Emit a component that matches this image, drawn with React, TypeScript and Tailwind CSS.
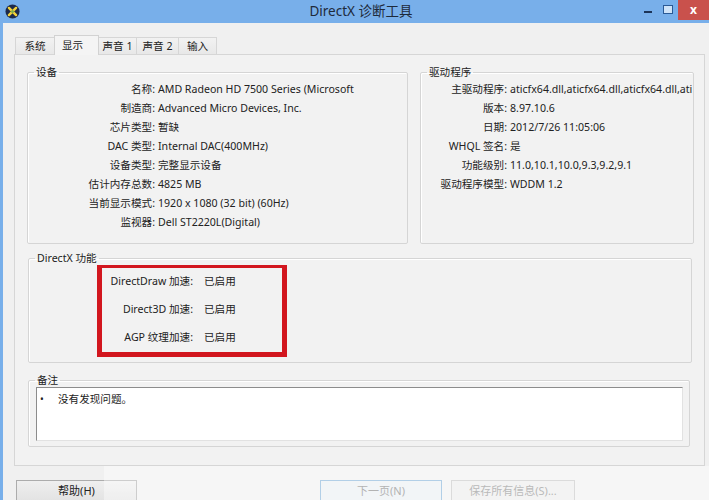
import React from "react";

const deviceRows: [string, string][] = [
  ["名称:", "AMD Radeon HD 7500 Series (Microsoft"],
  ["制造商:", "Advanced Micro Devices, Inc."],
  ["芯片类型:", "暂缺"],
  ["DAC 类型:", "Internal DAC(400MHz)"],
  ["设备类型:", "完整显示设备"],
  ["估计内存总数:", "4825 MB"],
  ["当前显示模式:", "1920 x 1080 (32 bit) (60Hz)"],
  ["监视器:", "Dell ST2220L(Digital)"],
];

const driverRows: [string, string][] = [
  ["主驱动程序:", "aticfx64.dll,aticfx64.dll,aticfx64.dll,ati"],
  ["版本:", "8.97.10.6"],
  ["日期:", "2012/7/26 11:05:06"],
  ["WHQL 签名:", "是"],
  ["功能级别:", "11.0,10.1,10.0,9.3,9.2,9.1"],
  ["驱动程序模型:", "WDDM 1.2"],
];

const featureRows: [string, string][] = [
  ["DirectDraw 加速:", "已启用"],
  ["Direct3D 加速:", "已启用"],
  ["AGP 纹理加速:", "已启用"],
];

const tabs = [
  { name: "系统", w: "w-[40px]", active: false },
  { name: "显示", w: "w-[45px]", active: true },
  { name: "声音 1", w: "w-[39px]", active: false },
  { name: "声音 2", w: "w-[43px]", active: false },
  { name: "输入", w: "w-[39px]", active: false },
];

function AppIcon() {
  return (
    <svg width="15" height="15" viewBox="0 0 16 16">
      <circle cx="8" cy="8" r="7.5" fill="#1d2a4a" />
      <path d="M4.2 4.2 L11.8 11.8 M11.8 4.2 L4.2 11.8" stroke="#f3d23a" strokeWidth="2.6" strokeLinecap="round" />
      <circle cx="8" cy="8" r="1.6" fill="#7fb04a" />
    </svg>
  );
}

function GroupBox({
  title,
  className,
  children,
}: {
  title: string;
  className: string;
  children?: React.ReactNode;
}) {
  return (
    <fieldset
      className={`min-w-0 shrink-0 overflow-hidden rounded-[2px] border border-[#d5d5d5] shadow-[inset_1px_1px_0_#ffffff] ${className}`}
    >
      <legend className="ml-[6px] px-[2px] leading-[14px] text-[#222]">{title}</legend>
      {children}
    </fieldset>
  );
}

function InfoRows({ rows, labelW }: { rows: [string, string][]; labelW: string }) {
  return (
    <div className="flex flex-col pt-[1px]">
      {rows.map(([k, v]) => (
        <div key={k} className="flex h-[19px] items-center whitespace-nowrap">
          <span className={`${labelW} shrink-0 text-right`}>{k}</span>
          <span className="ml-[3px]">{v}</span>
        </div>
      ))}
    </div>
  );
}

export default function App() {
  return (
    <div className="relative flex h-[500px] w-[709px] flex-col overflow-hidden bg-[#f0f0f0] font-['Noto_Sans','Noto_Sans_CJK_SC',sans-serif] text-[10.6px] text-[#222]">
      {/* title bar */}
      <div className="flex h-[23px] shrink-0 items-start bg-[#78afea]">
        <div className="w-[78px] shrink-0 pl-[5px] pt-[4px]">
          <AppIcon />
        </div>
        <div className="flex-1 pt-[2px] text-center text-[13.5px] leading-[18px] text-[#1e2a3a]">
          DirectX 诊断工具
        </div>
        <div className="flex h-[21px] w-[65px] shrink-0 items-start">
          <div className="mt-[11px] h-[2px] w-[8px] shrink-0 bg-[#1c3458]" />
          <div className="ml-[11px] mt-[5px] h-[9px] w-[10px] shrink-0 border border-[#2b5a96] bg-[#cfe3f8]" />
          <div className="ml-[5px] flex h-[20px] w-[31px] shrink-0 items-center justify-center bg-[#c9514c] text-[12px] font-bold leading-none text-white">
            x
          </div>
        </div>
      </div>

      {/* window body */}
      <div className="flex flex-1 flex-col border-l-[3px] border-[#78afea] bg-[#f0f0f0]">
        {/* tab strip */}
        <div className="flex h-[31px] items-end pl-[12px]">
          {tabs.map((t, i) =>
            t.active ? (
              <div
                key={t.name}
                className={`${t.w} relative z-10 -mb-px -ml-px flex h-[20px] justify-center border border-b-0 border-[#d2d2d2] bg-[#f4f4f4] pr-[8px] pt-[2px] leading-[14px]`}
              >
                {t.name}
              </div>
            ) : (
              <div
                key={t.name}
                className={`${t.w} ${i === 0 ? "" : "-ml-px"} flex h-[17px] items-center justify-center border border-b-0 border-[#d6d6d6] bg-gradient-to-b from-[#f2f2f2] to-[#e8e8e8] leading-[14px]`}
              >
                {t.name}
              </div>
            )
          )}
        </div>

        {/* tab page */}
        <div className="ml-[11px] flex h-[412px] w-[691px] flex-col border border-[#d6d6d6] bg-[#f2f2f2] pl-[12px] pt-[10px]">
          <div className="flex gap-[12px]">
            <GroupBox title="设备" className="h-[179px] w-[381px]">
              <InfoRows rows={deviceRows} labelW="w-[127px]" />
            </GroupBox>
            <GroupBox title="驱动程序" className="h-[179px] w-[274px]">
              <InfoRows rows={driverRows} labelW="w-[86px]" />
            </GroupBox>
          </div>

          <GroupBox title="DirectX 功能" className="ml-px mt-[7px] h-[112px] w-[664px]">
            <div className="-mt-[2px] ml-[68px] h-[94px] w-[190px] border-[5px] border-[#d2161e]">
              {featureRows.map(([k, v]) => (
                <div key={k} className="flex h-[28px] items-center whitespace-nowrap">
                  <span className="w-[91px] shrink-0 text-right">{k}</span>
                  <span className="ml-[11px]">{v}</span>
                </div>
              ))}
            </div>
          </GroupBox>

          <GroupBox title="备注" className="ml-px mt-[10px] h-[74px] w-[662px]">
            <div className="ml-[7px] h-[54px] w-[647px] border border-b-[#e2e2e2] border-l-[#8c8c8c] border-r-[#e2e2e2] border-t-[#8c8c8c] bg-white">
              <div className="flex items-center pt-[3px] leading-[16px]">
                <span className="ml-[3px] w-[18px] text-[10px]">•</span>
                <span>没有发现问题。</span>
              </div>
            </div>
          </GroupBox>
        </div>

        {/* buttons */}
        <div className="flex pl-[13px] pt-[14px]">
          <button className="h-[23px] w-[121px] border border-[#acacac] bg-gradient-to-b from-[#efefef] to-[#e2e2e2] text-[11px] text-[#222]">
            帮助(H)
          </button>
          <button className="ml-[183px] h-[23px] w-[122px] border border-[#7fb0d8] bg-[#e9eef2] text-[11px] text-[#808080]">
            下一页(N)
          </button>
          <button className="ml-[9px] h-[23px] w-[124px] border border-[#c4c4c4] bg-[#ececec] text-[11px] text-[#8a8a8a]">
            保存所有信息(S)...
          </button>
        </div>
      </div>

      {/* light haze over the lower right corner */}
      <div className="pointer-events-none absolute bottom-0 left-[104px] right-0 top-[466px] bg-white/40" />
    </div>
  );
}
